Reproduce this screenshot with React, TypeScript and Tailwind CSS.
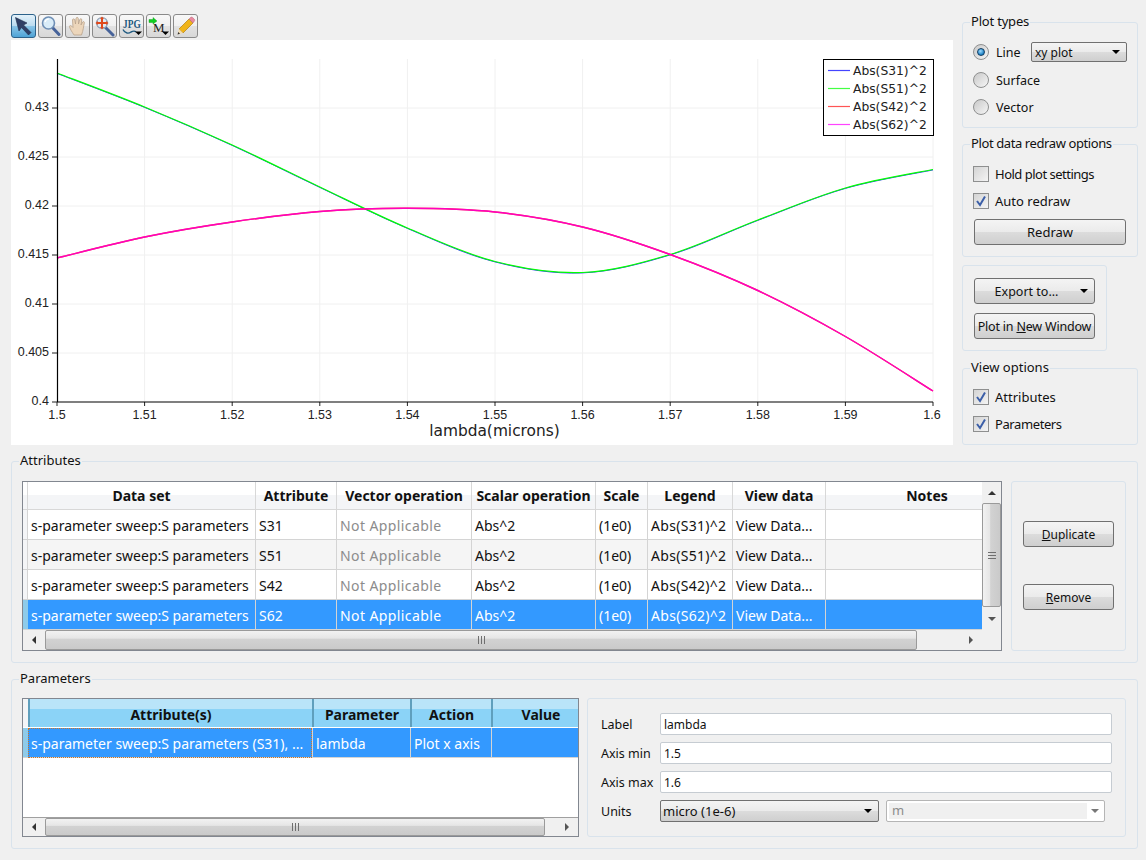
import React from "react";

const btnFace =
	"bg-[linear-gradient(#f4f4f4_0%,#ebebeb_48%,#dcdcdc_50%,#cfcfcf_100%)]";
const attrCols =
	"grid grid-cols-[5px_228px_81px_135px_124px_52px_85px_93px_156px]";
const paramCols = "grid grid-cols-[5px_284px_98px_81px_87px]";

const attrHeaders = [
	"Data set",
	"Attribute",
	"Vector operation",
	"Scalar operation",
	"Scale",
	"Legend",
	"View data",
];

const attrRows = [
	{ id: "S31", legend: "Abs(S31)^2" },
	{ id: "S51", legend: "Abs(S51)^2" },
	{ id: "S42", legend: "Abs(S42)^2" },
	{ id: "S62", legend: "Abs(S62)^2" },
];

// curve samples at each x tick, in plot-local pixels
const greenYs = [33, 67, 105, 147, 188, 221.5, 232.5, 214.5, 180, 148, 129.5];
const pinkYs = [218, 197, 182, 171.5, 168.3, 172, 187, 214.5, 250.5, 296.5, 351];

function smooth(ys: number[], dy = 0) {
	const pts = ys.map((y, i) => [46 + i * 87.6, y + dy]);
	let d = `M${pts[0][0]} ${pts[0][1]}`;
	for (let i = 0; i < pts.length - 1; i++) {
		const p0 = pts[Math.max(i - 1, 0)];
		const p1 = pts[i];
		const p2 = pts[i + 1];
		const p3 = pts[Math.min(i + 2, pts.length - 1)];
		const c1x = p1[0] + (p2[0] - p0[0]) / 6;
		const c1y = p1[1] + (p2[1] - p0[1]) / 6;
		const c2x = p2[0] - (p3[0] - p1[0]) / 6;
		const c2y = p2[1] - (p3[1] - p1[1]) / 6;
		d += ` C${c1x} ${c1y} ${c2x} ${c2y} ${p2[0]} ${p2[1]}`;
	}
	return d;
}

const xTicks = ["1.5", "1.51", "1.52", "1.53", "1.54", "1.55", "1.56", "1.57", "1.58", "1.59", "1.6"];
const yTicks = ["0.4", "0.405", "0.41", "0.415", "0.42", "0.425", "0.43"];

function Plot() {
	return (
		<svg viewBox="0 0 942 405" className="block h-[405px] w-[942px] bg-white">
			{xTicks.map((t, i) => {
				const x = 46 + i * 87.6;
				return (
					<g key={t}>
						{i > 0 && <line x1={x} y1={19} x2={x} y2={362} stroke="#f0f0f0" />}
						<line x1={x} y1={362} x2={x} y2={366} stroke="#222" />
						<text x={i === 10 ? 921 : x} y={379} textAnchor="middle" fontSize="12.5" fill="#222" fontFamily="Liberation Sans">
							{t}
						</text>
					</g>
				);
			})}
			{yTicks.map((t, i) => {
				const y = 362 - i * 49;
				return (
					<g key={t}>
						{i > 0 && <line x1={46} y1={y} x2={922} y2={y} stroke="#f0f0f0" />}
						<line x1={41} y1={y} x2={46} y2={y} stroke="#222" />
						<text x={38} y={y + 3} textAnchor="end" fontSize="12.5" fill="#222" fontFamily="Liberation Sans">
							{t}
						</text>
					</g>
				);
			})}
			<path d={smooth(greenYs, 0.4)} fill="none" stroke="#0000ff" strokeWidth="0.8" />
			<path d={smooth(greenYs)} fill="none" stroke="#00ff00" strokeWidth="1.2" />
			<path d={smooth(pinkYs)} fill="none" stroke="#ff0000" strokeWidth="1.4" />
			<path d={smooth(pinkYs)} fill="none" stroke="#ff00ff" strokeWidth="1.4" opacity="0.75" />
			<line x1={46.5} y1={19} x2={46.5} y2={362} stroke="#000" strokeWidth="1.2" />
			<line x1={46} y1={362} x2={922} y2={362} stroke="#000" strokeWidth="1.2" />
			<text x={483.5} y={396} textAnchor="middle" fontSize="15.4" fill="#222" fontFamily="DejaVu Sans">
				lambda(microns)
			</text>
			<rect x={812.5} y={19.5} width={110} height={76} fill="#fff" stroke="#000" />
			{[
				["#4444ff", "Abs(S31)^2"],
				["#44ff44", "Abs(S51)^2"],
				["#ff5555", "Abs(S42)^2"],
				["#ff44ff", "Abs(S62)^2"],
			].map(([c, t], i) => (
				<g key={t}>
					<line x1={817} y1={30.5 + i * 18} x2={839} y2={30.5 + i * 18} stroke={c} strokeWidth="1.2" />
					<text x={842} y={34.5 + i * 18} fontSize="12.3" fill="#222" fontFamily="DejaVu Sans">
						{t}
					</text>
				</g>
			))}
		</svg>
	);
}

function Tool({ active, children }: { active?: boolean; children: React.ReactNode }) {
	return (
		<div
			className={
				active
					? "h-[24px] w-[25px] rounded-[3px] border border-[#2c628b] bg-[linear-gradient(#e3f1fa_0%,#bcdcf0_48%,#8cc6e8_50%,#4fa3d6_100%)]"
					: "h-[24px] w-[25px] rounded-[3px] border border-[#8a8a8a] bg-[linear-gradient(#f8f8f8_0%,#f0f0f0_48%,#e2e2e2_50%,#d8d8d8_100%)]"
			}
		>
			<svg viewBox="0 0 23 22" className="block h-[22px] w-[23px]">
				{children}
			</svg>
		</div>
	);
}

function Toolbar() {
	return (
		<div className="mb-[2px] flex h-[24px] gap-[2px]">
			<Tool active>
				<path d="M3.5 2.5 L15 8 L11.5 10 L19 17.5 L16.5 20 L9.5 12.5 L7 16 Z" fill="#2f3f66" stroke="#1f2b4a" strokeWidth="0.6" />
			</Tool>
			<Tool>
				<line x1="13" y1="12" x2="20" y2="19.5" stroke="#47639a" strokeWidth="3" strokeLinecap="round" />
				<circle cx="9.5" cy="8" r="6" fill="#d9ecf8" stroke="#6f8fb5" strokeWidth="1.6" />
				<path d="M6 7 A4 4 0 0 1 10 4" fill="none" stroke="#fff" strokeWidth="1.2" />
			</Tool>
			<Tool>
				<path
					d="M8 20 C6 17 3.5 13 3.5 11.5 C3.5 10 5.5 10.5 7 12.5 L6.5 5 C6.5 3.5 8.5 3.5 8.8 5 L9.5 9 L10 3.5 C10.2 2 12.2 2 12.3 3.5 L12.5 9 L13.8 4.5 C14.2 3.2 16 3.6 15.8 5 L15 10 L16.6 7 C17.3 6 18.7 6.6 18.3 8 C17.5 11 17.5 15 15.5 20 Z"
					fill="#ecd6bb"
					stroke="#b9a28a"
					strokeWidth="0.8"
				/>
			</Tool>
			<Tool>
				<line x1="12" y1="12" x2="20" y2="20" stroke="#47639a" strokeWidth="3" strokeLinecap="round" />
				<circle cx="9" cy="8" r="5.5" fill="#dfe9f2" stroke="#8a9bb0" strokeWidth="1.2" />
				<path d="M9 1.5 L11 4 H10 V7 H13 V6 L15.5 8 L13 10 V9 H10 V12 H11 L9 14.5 L7 12 H8 V9 H5 V10 L2.5 8 L5 6 V7 H8 V4 H7 Z" fill="#e0491d" />
			</Tool>
			<Tool>
				<text transform="translate(3 13) scale(0.72 1)" fontSize="13" fontWeight="bold" fill="#1f5a80" fontFamily="Liberation Serif">
					JPG
				</text>
				<path d="M3 14.5 C5 19 9 18.5 11 17 C13 16 15 16 16 17" fill="none" stroke="#1f5a80" strokeWidth="1.4" />
				<path d="M15 16.5 H22 L18.5 20 Z" fill="#000" />
			</Tool>
			<Tool>
				<path d="M2 4.5 L6 4.5 L6 2.5 L10 6 L6 9 L6 7.5 L2 7.5 Z" fill="#0fd020" stroke="#0a9a18" strokeWidth="0.4" />
				<text x="6" y="16.5" fontSize="13" fill="#222" fontFamily="Liberation Serif">
					M
				</text>
				<path d="M15 16.5 H22 L18.5 20 Z" fill="#000" />
			</Tool>
			<Tool>
				<path d="M5 14 L15 4 L19 8 L9 18 Z" fill="#f0b419" stroke="#b27f10" strokeWidth="0.7" />
				<path d="M15 4 L16.5 2.5 C17.2 1.9 18 1.9 18.7 2.6 L20.2 4 C20.9 4.8 20.9 5.5 20.3 6.2 L19 8 Z" fill="#e98aa0" stroke="#b2667a" strokeWidth="0.5" />
				<path d="M5 14 L9 18 L3.5 19.5 Z" fill="#f3dcb0" />
				<path d="M3.5 19.5 L4.3 17 L6 18.7 Z" fill="#333" />
			</Tool>
		</div>
	);
}

function Group({ title, titleClass = "", className, children }: { title?: string; titleClass?: string; className: string; children: React.ReactNode }) {
	return (
		<div className={`rounded-[3px] border border-[#d9e3ec] ${className}`}>
			{title && (
				<div className={`-mt-[11px] -ml-[3px] h-[18px] w-fit bg-[#f0f0f0] px-px text-[13px] leading-[18px] whitespace-nowrap ${titleClass}`}>
					{title}
				</div>
			)}
			{children}
		</div>
	);
}

function Tri({ dir = "down", color = "#000" }: { dir?: "down" | "up" | "left" | "right"; color?: string }) {
	const pts = {
		down: "0,0 8,0 4,4",
		up: "0,4 8,4 4,0",
		left: "4,0 4,8 0,4",
		right: "0,0 0,8 4,4",
	}[dir];
	const box = dir === "down" || dir === "up" ? "0 0 8 4" : "0 0 4 8";
	return (
		<svg viewBox={box} className={dir === "down" || dir === "up" ? "h-[4px] w-[8px]" : "h-[8px] w-[4px]"}>
			<polygon points={pts} fill={color} />
		</svg>
	);
}

function Radio({ on, label }: { on?: boolean; label: string }) {
	return (
		<div className="flex items-center">
			<div className="flex h-[16px] w-[16px] items-center justify-center rounded-full border border-[#8e8f8f] bg-[linear-gradient(135deg,#c8c8c8,#f6f6f6)]">
				{on && (
					<div className="h-[8px] w-[8px] rounded-full border border-[#123e63] bg-[radial-gradient(circle_at_40%_35%,#9fdcff,#1b80c4_70%)]" />
				)}
			</div>
			<span className="ml-[7px] pt-[2px] text-[12.5px]">{label}</span>
		</div>
	);
}

function Check({ on, label, labelClass = "" }: { on?: boolean; label: string; labelClass?: string }) {
	return (
		<div className="flex h-[16px] items-center">
			<div className="h-[16px] w-[16px] border border-[#8e8f8f] bg-[linear-gradient(135deg,#d4d4d4,#f4f4f4)]">
				{on && (
					<svg viewBox="0 0 14 14" className="block h-[14px] w-[14px]">
						<path d="M3 7 L6 11 L11 2.5" fill="none" stroke="#3c5fa8" strokeWidth="2" />
					</svg>
				)}
			</div>
			<span className={`ml-[6px] pt-[2px] text-[13px] whitespace-nowrap ${labelClass}`}>{label}</span>
		</div>
	);
}

function Btn({ className, children }: { className: string; children: React.ReactNode }) {
	return (
		<div className={`flex h-[26px] items-center justify-center rounded-[3px] border border-[#707070] pt-[2px] whitespace-nowrap ${btnFace} ${className}`}>
			{children}
		</div>
	);
}

function Grip({ vertical }: { vertical?: boolean }) {
	return vertical ? (
		<div className="flex flex-col gap-[2px]">
			<div className="h-px w-[8px] bg-[#6f6f6f]" />
			<div className="h-px w-[8px] bg-[#6f6f6f]" />
			<div className="h-px w-[8px] bg-[#6f6f6f]" />
		</div>
	) : (
		<div className="flex gap-[2px]">
			<div className="h-[8px] w-px bg-[#6f6f6f]" />
			<div className="h-[8px] w-px bg-[#6f6f6f]" />
			<div className="h-[8px] w-px bg-[#6f6f6f]" />
		</div>
	);
}

function HScroll({ thumb, className }: { thumb: string; className: string }) {
	return (
		<div className={`flex items-center bg-[#f0f0f0] ${className}`}>
			<div className="flex w-[22px] justify-center">
				<Tri dir="left" color="#333" />
			</div>
			<div className={`flex h-full items-center justify-center rounded-[2px] border border-[#9a9a9a] bg-[linear-gradient(#f2f2f2_0%,#e6e6e6_40%,#d2d2d2_45%,#cacaca_100%)] ${thumb}`}>
				<Grip />
			</div>
			<div className="flex-1" />
			<div className="flex w-[22px] justify-center">
				<Tri dir="right" color="#555" />
			</div>
		</div>
	);
}

function VScroll() {
	return (
		<div className="flex w-[19px] flex-col bg-[#f0f0f0]">
			<div className="flex h-[21px] items-center justify-center">
				<Tri dir="up" color="#333" />
			</div>
			<div className="flex h-[104px] items-center justify-center rounded-[2px] border border-[#9a9a9a] bg-[linear-gradient(90deg,#f2f2f2_0%,#e6e6e6_40%,#d2d2d2_45%,#cacaca_100%)]">
				<Grip vertical />
			</div>
			<div className="flex flex-1 items-center justify-center">
				<Tri dir="down" color="#555" />
			</div>
		</div>
	);
}

function Cell({ children, className = "" }: { children?: React.ReactNode; className?: string }) {
	return (
		<div className={`truncate border-r border-b border-[#d4d4d4] px-[3px] leading-[31px] ${className}`}>
			{children}
		</div>
	);
}

function AttributesTable() {
	return (
		<div className="h-[170px] w-[980px] border border-[#828790] bg-white text-[14px]">
			<div className="flex h-[148px]">
				<div className="w-[959px]">
					<div className={`${attrCols} h-[28px] bg-[linear-gradient(#ffffff_0%,#ffffff_45%,#f4f5f7_46%,#f4f5f7_100%)]`}>
						<div className="border-r border-b border-[#d8d8d8]" />
						{attrHeaders.map((h) => (
							<div key={h} className="truncate border-r border-b border-[#d8d8d8] text-center text-[14px] leading-[27px] font-bold">
								{h}
							</div>
						))}
						<div className="truncate border-b border-[#d8d8d8] pl-[46px] text-center text-[14px] leading-[27px] font-bold">
							Notes
						</div>
					</div>
					{attrRows.map((r, i) => {
						const sel = i === 3;
						const rowBg = sel ? "bg-[#3399ff] text-white" : i === 1 ? "bg-[#f5f5f5]" : "bg-white";
						return (
							<div key={r.id} className={`${attrCols} h-[30px] ${rowBg}`}>
								<div className={sel ? "border-b border-[#d4d4d4] bg-[#8ecbea]" : "border-r border-b border-[#d4d4d4] bg-[#f4f5f7]"} />
								<Cell>s-parameter sweep:S parameters</Cell>
								<Cell>{r.id}</Cell>
								<Cell className={sel ? "tracking-[0.4px]" : "tracking-[0.4px] text-[#8c8c8c]"}>Not Applicable</Cell>
								<Cell>Abs^2</Cell>
								<Cell>(1e0)</Cell>
								<Cell className="pr-0 tracking-[0.3px]">{r.legend}</Cell>
								<Cell>View Data...</Cell>
								<Cell className="border-r-0" />
							</div>
						);
					})}
				</div>
				<VScroll />
			</div>
			<div className="flex h-[20px]">
				<HScroll thumb="w-[872px]" className="w-[959px]" />
				<div className="flex-1 bg-[#f0f0f0]" />
			</div>
		</div>
	);
}

function ParamsTable() {
	const head = "truncate border-l-2 border-[#5f9fbd] text-center text-[14px] leading-[32px] font-bold";
	const cell = "truncate border-b border-l border-[#d4d4d4] px-[3px] leading-[31px]";
	return (
		<div className="flex h-[139px] w-[557px] flex-col border border-[#828790] bg-white text-[14px]">
			<div className={`${paramCols} h-[29px] border-b border-white bg-[linear-gradient(#b9e4f9_0%,#b9e4f9_35%,#8bd3f7_36%,#8bd3f7_100%)]`}>
				<div className="bg-[#f4f5f7]" />
				<div className={head}>Attribute(s)</div>
				<div className={head}>Parameter</div>
				<div className={head}>Action</div>
				<div className={`${head} pl-[11px]`}>Value</div>
			</div>
			<div className={`${paramCols} h-[30px] bg-[#3399ff] text-white`}>
				<div className="border-b border-[#d4d4d4] bg-[#8ecbea]" />
				<div className="truncate border-b border-[#d4d4d4] pl-[3px] leading-[31px] outline-1 -outline-offset-1 outline-[#c9772a] outline-dotted">
					s-parameter sweep:S parameters (S31), ...
				</div>
				<div className={cell}>lambda</div>
				<div className={cell}>Plot x axis</div>
				<div className={cell} />
			</div>
			<div className="flex-1" />
			<HScroll thumb="w-[500px]" className="h-[19px] border-t border-[#a0a0a0]" />
		</div>
	);
}

function Field({ label, value }: { label: string; value: string }) {
	return (
		<div className="flex h-[22px] items-center">
			<span className="w-[59px] pt-[2px] text-[12.5px]">{label}</span>
			<div className="flex h-[22px] w-[452px] items-center rounded-[2px] border border-[#c6ccd2] bg-white px-[3px] pt-[2px] text-[12px]">
				{value}
			</div>
		</div>
	);
}

function ParamForm() {
	return (
		<div className="flex h-[139px] w-[539px] flex-col gap-[7px] rounded-[3px] border border-[#d9e3ec] pt-[14px] pl-[13px]">
			<Field label="Label" value="lambda" />
			<Field label="Axis min" value="1.5" />
			<Field label="Axis max" value="1.6" />
			<div className="flex h-[22px] items-center">
				<span className="w-[59px] pt-[2px] text-[12.5px]">Units</span>
				<div className={`flex h-[22px] w-[219px] items-center justify-between rounded-[2px] border border-[#707070] pr-[6px] pl-[2px] text-[13px] ${btnFace}`}>
					<span className="pt-[2px]">micro (1e-6)</span>
					<Tri />
				</div>
				<div className="ml-[7px] flex h-[22px] w-[219px] items-center rounded-[2px] border border-[#b5b5b5] bg-white p-[2px] text-[13px] text-[#8c8c8c]">
					<div className="flex h-full w-[198px] items-center bg-[#f0f0f0] pl-[3px]">m</div>
					<div className="flex flex-1 justify-center">
						<Tri color="#777" />
					</div>
				</div>
			</div>
		</div>
	);
}

export default function App() {
	return (
		<div className="h-[860px] w-[1146px] overflow-hidden bg-[#f0f0f0] pl-[11px] font-['Noto_Sans',sans-serif] text-[#111]">
			<div className="flex h-[445px] gap-[9px]">
				<div className="w-[942px] pt-[14px]">
					<Toolbar />
					<Plot />
				</div>
				<div className="w-[176px] pt-[22px]">
					<Group title="Plot types" titleClass="tracking-[-0.2px]" className="h-[106px] pl-[10px]">
						<div className="mt-[12px] flex h-[20px] items-center justify-between pr-[10px]">
							<Radio on label="Line" />
							<div className={`flex h-[20px] w-[96px] items-center justify-between rounded-[2px] border border-[#707070] pr-[6px] pl-[3px] text-[12px] ${btnFace}`}>
								<span className="pt-[2px]">xy plot</span>
								<Tri />
							</div>
						</div>
						<div className="mt-[8px] flex h-[20px] items-center">
							<Radio label="Surface" />
						</div>
						<div className="mt-[7px] flex h-[20px] items-center">
							<Radio label="Vector" />
						</div>
					</Group>
					<Group title="Plot data redraw options" titleClass="tracking-[-0.4px]" className="mt-[16px] h-[113px] pl-[10px]">
						<div className="mt-[14px]">
							<Check label="Hold plot settings" labelClass="tracking-[-0.5px]" />
						</div>
						<div className="mt-[11px]">
							<Check on label="Auto redraw" />
						</div>
						<Btn className="mt-[10px] ml-px w-[152px] text-[13px]">Redraw</Btn>
					</Group>
					<Group className="mt-[8px] h-[86px] w-[145px] pt-[12px] pl-[11px]">
						<Btn className="relative w-[121px] pr-[16px] text-[12.5px]">
							Export to...
							<span className="absolute top-[10px] right-[6px]">
								<Tri />
							</span>
						</Btn>
						<Btn className="mt-[9px] w-[121px] text-[12.5px] tracking-[-0.2px]">
							<span>
								Plot in <u>N</u>ew Window
							</span>
						</Btn>
					</Group>
					<Group title="View options" className="mt-[17px] h-[77px] pl-[10px]">
						<div className="mt-[13px]">
							<Check on label="Attributes" />
						</div>
						<div className="mt-[11px]">
							<Check on label="Parameters" labelClass="tracking-[-0.4px]" />
						</div>
					</Group>
				</div>
			</div>
			<Group title="Attributes" className="mt-[16px] h-[202px] w-[1127px] pl-[10px]">
				<div className="mt-[12px] flex gap-[9px]">
					<AttributesTable />
					<div className="h-[170px] w-[115px] rounded-[3px] border border-[#d9e3ec] pt-[39px] pl-[11px]">
						<Btn className="w-[91px] text-[12px]">
							<span>
								<u>D</u>uplicate
							</span>
						</Btn>
						<Btn className="mt-[37px] w-[91px] text-[12px]">
							<span>
								<u>R</u>emove
							</span>
						</Btn>
					</div>
				</div>
			</Group>
			<Group title="Parameters" className="mt-[16px] h-[170px] w-[1127px] pl-[10px]">
				<div className="mt-[11px] flex gap-[8px]">
					<ParamsTable />
					<ParamForm />
				</div>
			</Group>
		</div>
	);
}
